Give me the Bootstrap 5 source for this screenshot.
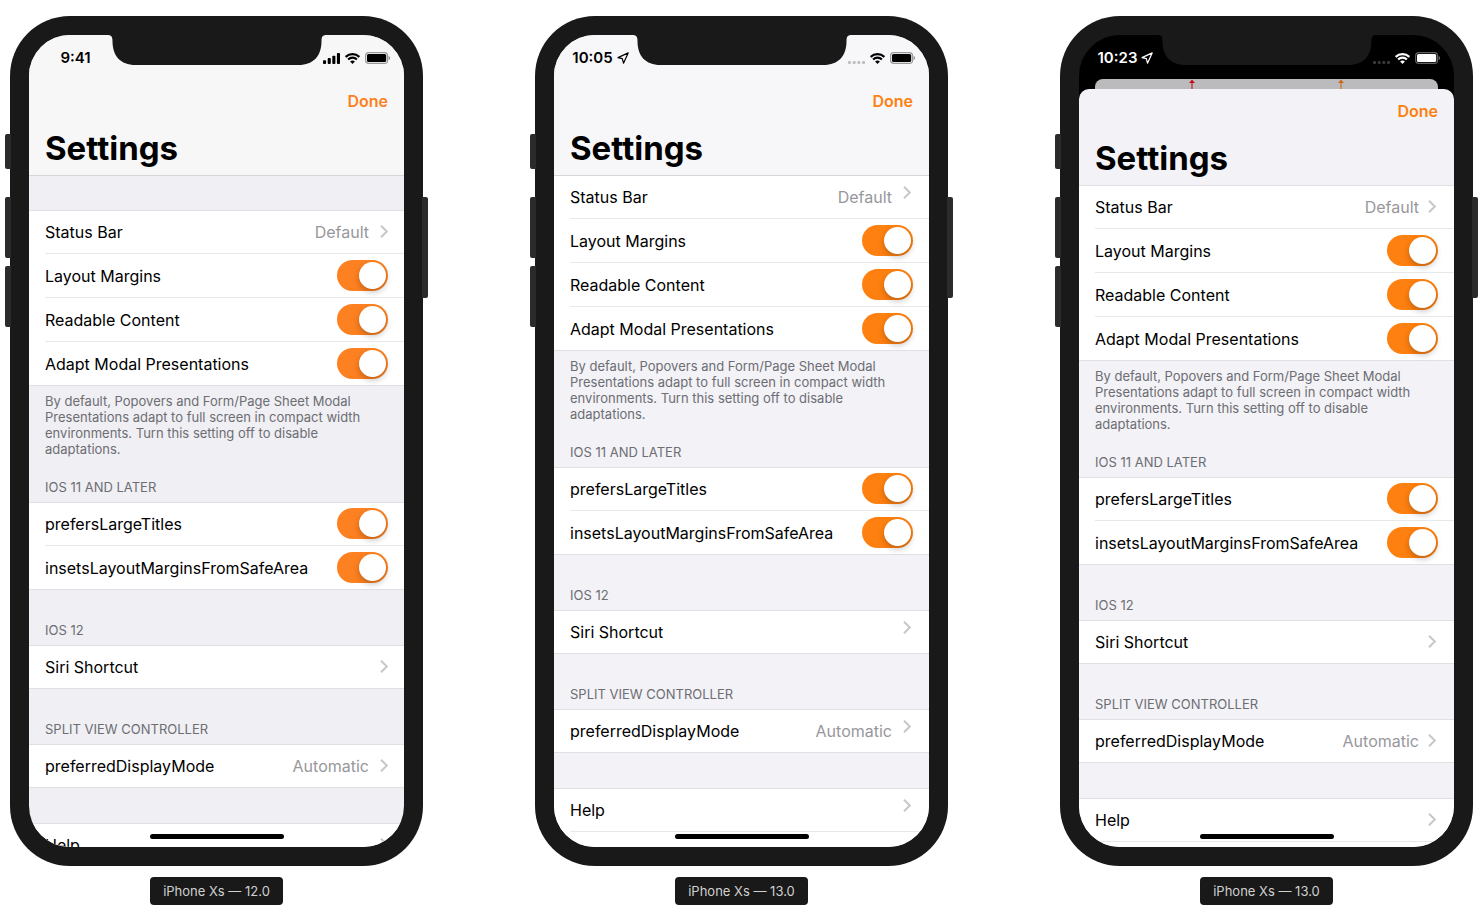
<!DOCTYPE html>
<html lang="en">
<head>
<meta charset="utf-8">
<meta name="viewport" content="width=device-width, initial-scale=1">
<title>Settings on iPhone Xs</title>
<link href="https://cdn.jsdelivr.net/npm/bootstrap@5.3.0/dist/css/bootstrap.min.css" rel="stylesheet">
<style>
  body { font-family: Inter, "Liberation Sans", sans-serif; font-size: 16px; background: #fff; color: #000; }
  .gallery { padding: 16px 10px; }
  .device { flex: 0 1 413px; min-width: 320px; }
  .shell { background: #191919; border-radius: 60px; padding: 19px; }
  .screen { aspect-ratio: 375 / 812; border-radius: 41px; background: #efeff4; --rule: #e0e0e4; --tint: #fd8120; --edge: 16px; }
  .ios13 { background: #f2f2f7; --tint: #fe8010; --edge: 18px; }
  .modal-screen { background: #000; }

  /* hardware keys on the sides of the shell */
  .key { position: absolute; left: -5px; width: 6px; background: #2b2b2b; border-radius: 2px 0 0 2px; }
  .key-mute { top: 118px; height: 35px; }
  .key-up { top: 181px; height: 61px; }
  .key-down { top: 250px; height: 61px; }
  .key-power { left: auto; right: -5px; top: 181px; height: 101px; border-radius: 0 2px 2px 0; }
  .notch { position: absolute; top: 0; left: 50%; transform: translateX(-50%); z-index: 3; }
  .home-bar { position: absolute; bottom: 8px; left: 50%; transform: translateX(-50%); width: 134px; height: 5px; border-radius: 3px; background: #000; z-index: 3; }

  .status { height: 44px; padding-right: 14px; font-size: 15px; font-weight: 600; flex: none; }
  .clock { width: 93px; gap: 4px; padding-top: 2px; }
  .radios { gap: 5px; padding-top: 2px; }

  .top-area { background: #f7f7f7; box-shadow: 0 1px 0 #d6d6d8; z-index: 1; flex: none; }
  .ios13 .top-area { background: #f7f7f9; }
  .sheet { background: #f2f2f7; border-radius: 10px 10px 0 0; }
  .ios13 .sheet .top-area { background: none; box-shadow: none; }
  .done-row { height: 44px; padding: 0 16px; }
  .done-btn { color: var(--tint); font-size: 16px; font-weight: 600; line-height: 24px; }
  .big-title { height: 52px; padding: 0 16px; font-size: 33px; font-weight: 700; line-height: 50px; }
  .peek { height: 10px; margin: 0 16px; padding: 0 92px; background: #bbbbbd; border-radius: 8px 8px 0 0; flex: none; }

  .group { background: #fff; box-shadow: inset 0 1px 0 var(--rule), inset 0 -1px 0 var(--rule); flex: none; }
  .group.open { box-shadow: inset 0 1px 0 var(--rule); }
  .cell { height: 44px; margin-left: 16px; padding-right: 16px; border-bottom: 1px solid #e8e8ea; color: #000; text-decoration: none; }
  .group:not(.open) .cell:last-child { border-bottom-color: transparent; }
  a.cell { padding-right: var(--edge); }
  .cell-value { color: #97979c; margin-right: 11px; }
  .sheet .cell-value { margin-right: 9px; }
  .chevron { color: #c7c7cc; flex: none; }
  .raised .chevron { margin-bottom: 8px; }
  .gap-block { height: 35px; flex: none; }
  .note { padding: 7px 32px 0 16px; font-size: 13px; line-height: 16px; height: 72px; color: #6d6d72; flex: none; }
  .group-head { height: 55px; padding: 0 16px 7px; font-size: 13px; line-height: 16px; color: #6d6d72; flex: none; }
  .note + .group-head { height: 44px; }

  .toggle { -webkit-appearance: none; appearance: none; flex: none; width: 51px; height: 31px; margin: 0; padding: 2px; border-radius: 16px; background: #e5e5ea; }
  .toggle::before { content: ""; display: block; width: 27px; height: 27px; border-radius: 50%; background: #fff; box-shadow: 0 3px 6px rgba(0,0,0,.24); }
  .toggle:checked { background: var(--tint); }
  .toggle:checked::before { margin-left: auto; }

  .tag { background: #191919; color: #d0d0d0; border-radius: 4px; margin-top: 11px; padding: 6px 13px; font-size: 13px; line-height: 16px; }
</style>
</head>
<body>
<svg class="d-none" aria-hidden="true">
  <symbol id="notch" viewBox="0 0 219 30"><path fill="#191919" d="M0 0C4 0 5 2 5 6C5 21 13 30 28 30H191C206 30 214 21 214 6C214 2 215 0 219 0Z"/></symbol>
  <symbol id="chev" viewBox="0 0 8 13"><path d="M1 .8 6.8 6.5 1 12.2" fill="none" stroke="currentColor" stroke-width="2"/></symbol>
  <symbol id="bars" viewBox="0 0 17 11"><path fill="currentColor" d="M0 8.2q0-.9.9-.9h1.3q.9 0 .9.9v1.900q0 .9-.9.9H.9q-.9 0-.9-.9zM4.700 6q0-.9.9-.9h1.300q.9 0 .9.9v4.100q0 .9-.9.9H5.600q-.9 0-.9-.9zM9.300 3.600q0-.9.9-.9h1.300q.9 0 .9.9v6.500q0 .9-.9.9h-1.300q-.9 0-.9-.9zM13.900.9q0-.9.9-.9h1.300q.9 0 .9.9v9.200q0 .9-.9.9h-1.300q-.9 0-.9-.9z"/></symbol>
  <symbol id="dots" viewBox="0 0 17 11"><g fill="currentColor" opacity=".22"><rect y="8" width="3" height="3" rx="1"/><rect x="4.700" y="8" width="3" height="3" rx="1"/><rect x="9.300" y="8" width="3" height="3" rx="1"/><rect x="14" y="8" width="3" height="3" rx="1"/></g></symbol>
  <symbol id="wifi" viewBox="0 0 15 11"><g fill="none" stroke="currentColor" stroke-width="2.100"><path d="M.7 3.900a9.700 9.700 0 0 1 13.600 0"/><path d="M3.100 6.500a6.200 6.200 0 0 1 8.800 0"/></g><path fill="currentColor" d="M5.100 8.600a3.400 3.400 0 0 1 4.800 0L7.500 11z"/></symbol>
  <symbol id="battery" viewBox="0 0 25 12"><rect x=".6" y=".6" width="22" height="10.800" rx="3.200" fill="none" stroke="currentColor" stroke-width="1.200" opacity=".38"/><rect x="2" y="2" width="19.200" height="8" rx="1.600" fill="currentColor"/><path d="M23.700 4v4q1.300-.6 1.300-2t-1.300-2z" fill="currentColor" opacity=".45"/></symbol>
  <symbol id="locate" viewBox="0 0 12 12"><path d="M1 5.600 11.200.9 6.500 11.200 5.300 6.700z" fill="none" stroke="currentColor" stroke-width="1.200" stroke-linejoin="round"/></symbol>
  <symbol id="arrow" viewBox="0 0 10 10"><path d="M5 10V3" stroke="currentColor"/><path d="M2.200 4 5 .4 7.800 4z" fill="currentColor"/></symbol>
</svg>

<main class="gallery d-flex flex-wrap justify-content-between">

  <!-- iOS 12 -->
  <section class="device d-flex flex-column align-items-center">
    <div class="shell position-relative w-100">
      <span class="key key-mute"></span><span class="key key-up"></span><span class="key key-down"></span><span class="key key-power"></span>
      <div class="screen position-relative overflow-hidden d-flex flex-column">
        <svg class="notch" width="219" height="30"><use href="#notch"/></svg>
        <header class="top-area position-relative">
          <div class="status d-flex justify-content-between align-items-center">
            <div class="clock d-flex justify-content-center align-items-center">9:41</div>
            <div class="radios d-flex align-items-center"><svg width="17" height="11"><use href="#bars"/></svg><svg width="15" height="11"><use href="#wifi"/></svg><svg width="25" height="12"><use href="#battery"/></svg></div>
          </div>
          <div class="done-row d-flex justify-content-end align-items-center"><button type="button" class="done-btn btn border-0 p-0">Done</button></div>
          <h1 class="big-title m-0">Settings</h1>
        </header>
        <div class="gap-block"></div>
        <div class="group">
          <a href="#" class="cell d-flex align-items-center"><span class="me-auto">Status Bar</span><span class="cell-value">Default</span><svg class="chevron" width="8" height="13"><use href="#chev"/></svg></a>
          <div class="cell d-flex align-items-center justify-content-between"><label for="a1">Layout Margins</label><input class="toggle" type="checkbox" role="switch" id="a1" checked></div>
          <div class="cell d-flex align-items-center justify-content-between"><label for="a2">Readable Content</label><input class="toggle" type="checkbox" role="switch" id="a2" checked></div>
          <div class="cell d-flex align-items-center justify-content-between"><label for="a3">Adapt Modal Presentations</label><input class="toggle" type="checkbox" role="switch" id="a3" checked></div>
        </div>
        <p class="note m-0">By default, Popovers and Form/Page Sheet Modal Presentations adapt to full screen in compact width environments. Turn this setting off to disable adaptations.</p>
        <h2 class="group-head m-0 d-flex align-items-end fw-normal">IOS 11 AND LATER</h2>
        <div class="group">
          <div class="cell d-flex align-items-center justify-content-between"><label for="a4">prefersLargeTitles</label><input class="toggle" type="checkbox" role="switch" id="a4" checked></div>
          <div class="cell d-flex align-items-center justify-content-between"><label for="a5">insetsLayoutMarginsFromSafeArea</label><input class="toggle" type="checkbox" role="switch" id="a5" checked></div>
        </div>
        <h2 class="group-head m-0 d-flex align-items-end fw-normal">IOS 12</h2>
        <div class="group"><a href="#" class="cell d-flex align-items-center"><span class="me-auto">Siri Shortcut</span><svg class="chevron" width="8" height="13"><use href="#chev"/></svg></a></div>
        <h2 class="group-head m-0 d-flex align-items-end fw-normal">SPLIT VIEW CONTROLLER</h2>
        <div class="group"><a href="#" class="cell d-flex align-items-center"><span class="me-auto">preferredDisplayMode</span><span class="cell-value">Automatic</span><svg class="chevron" width="8" height="13"><use href="#chev"/></svg></a></div>
        <div class="gap-block"></div>
        <div class="group open"><a href="#" class="cell d-flex align-items-center"><span class="me-auto">Help</span><svg class="chevron" width="8" height="13"><use href="#chev"/></svg></a></div>
        <span class="home-bar"></span>
      </div>
    </div>
    <div class="tag">iPhone Xs — 12.0</div>
  </section>

  <!-- iOS 13, full screen -->
  <section class="device d-flex flex-column align-items-center">
    <div class="shell position-relative w-100">
      <span class="key key-mute"></span><span class="key key-up"></span><span class="key key-down"></span><span class="key key-power"></span>
      <div class="screen ios13 raised position-relative overflow-hidden d-flex flex-column">
        <svg class="notch" width="219" height="30"><use href="#notch"/></svg>
        <header class="top-area position-relative">
          <div class="status d-flex justify-content-between align-items-center">
            <div class="clock d-flex justify-content-center align-items-center">10:05<svg width="12" height="12"><use href="#locate"/></svg></div>
            <div class="radios d-flex align-items-center"><svg width="17" height="11"><use href="#dots"/></svg><svg width="15" height="11"><use href="#wifi"/></svg><svg width="25" height="12"><use href="#battery"/></svg></div>
          </div>
          <div class="done-row d-flex justify-content-end align-items-center"><button type="button" class="done-btn btn border-0 p-0">Done</button></div>
          <h1 class="big-title m-0">Settings</h1>
        </header>
        <div class="group">
          <a href="#" class="cell d-flex align-items-center"><span class="me-auto">Status Bar</span><span class="cell-value">Default</span><svg class="chevron" width="8" height="13"><use href="#chev"/></svg></a>
          <div class="cell d-flex align-items-center justify-content-between"><label for="b1">Layout Margins</label><input class="toggle" type="checkbox" role="switch" id="b1" checked></div>
          <div class="cell d-flex align-items-center justify-content-between"><label for="b2">Readable Content</label><input class="toggle" type="checkbox" role="switch" id="b2" checked></div>
          <div class="cell d-flex align-items-center justify-content-between"><label for="b3">Adapt Modal Presentations</label><input class="toggle" type="checkbox" role="switch" id="b3" checked></div>
        </div>
        <p class="note m-0">By default, Popovers and Form/Page Sheet Modal Presentations adapt to full screen in compact width environments. Turn this setting off to disable adaptations.</p>
        <h2 class="group-head m-0 d-flex align-items-end fw-normal">IOS 11 AND LATER</h2>
        <div class="group">
          <div class="cell d-flex align-items-center justify-content-between"><label for="b4">prefersLargeTitles</label><input class="toggle" type="checkbox" role="switch" id="b4" checked></div>
          <div class="cell d-flex align-items-center justify-content-between"><label for="b5">insetsLayoutMarginsFromSafeArea</label><input class="toggle" type="checkbox" role="switch" id="b5" checked></div>
        </div>
        <h2 class="group-head m-0 d-flex align-items-end fw-normal">IOS 12</h2>
        <div class="group"><a href="#" class="cell d-flex align-items-center"><span class="me-auto">Siri Shortcut</span><svg class="chevron" width="8" height="13"><use href="#chev"/></svg></a></div>
        <h2 class="group-head m-0 d-flex align-items-end fw-normal">SPLIT VIEW CONTROLLER</h2>
        <div class="group"><a href="#" class="cell d-flex align-items-center"><span class="me-auto">preferredDisplayMode</span><span class="cell-value">Automatic</span><svg class="chevron" width="8" height="13"><use href="#chev"/></svg></a></div>
        <div class="gap-block"></div>
        <div class="group open flex-fill"><a href="#" class="cell d-flex align-items-center"><span class="me-auto">Help</span><svg class="chevron" width="8" height="13"><use href="#chev"/></svg></a></div>
        <span class="home-bar"></span>
      </div>
    </div>
    <div class="tag">iPhone Xs — 13.0</div>
  </section>

  <!-- iOS 13, card sheet -->
  <section class="device d-flex flex-column align-items-center">
    <div class="shell position-relative w-100">
      <span class="key key-mute"></span><span class="key key-up"></span><span class="key key-down"></span><span class="key key-power"></span>
      <div class="screen ios13 modal-screen position-relative overflow-hidden d-flex flex-column">
        <svg class="notch" width="219" height="30"><use href="#notch"/></svg>
        <div class="status text-white d-flex justify-content-between align-items-center">
          <div class="clock d-flex justify-content-center align-items-center">10:23<svg width="12" height="12"><use href="#locate"/></svg></div>
          <div class="radios d-flex align-items-center"><svg width="17" height="11"><use href="#dots"/></svg><svg width="15" height="11"><use href="#wifi"/></svg><svg width="25" height="12"><use href="#battery"/></svg></div>
        </div>
        <div class="peek d-flex justify-content-between">
          <svg width="10" height="10" color="#c5040f"><use href="#arrow"/></svg>
          <svg width="10" height="10" color="#cc650c"><use href="#arrow"/></svg>
        </div>
        <div class="sheet d-flex flex-column flex-fill">
          <header class="top-area">
            <div class="done-row d-flex justify-content-end align-items-center"><button type="button" class="done-btn btn border-0 p-0">Done</button></div>
            <h1 class="big-title m-0">Settings</h1>
          </header>
          <div class="group">
            <a href="#" class="cell d-flex align-items-center"><span class="me-auto">Status Bar</span><span class="cell-value">Default</span><svg class="chevron" width="8" height="13"><use href="#chev"/></svg></a>
            <div class="cell d-flex align-items-center justify-content-between"><label for="c1">Layout Margins</label><input class="toggle" type="checkbox" role="switch" id="c1" checked></div>
            <div class="cell d-flex align-items-center justify-content-between"><label for="c2">Readable Content</label><input class="toggle" type="checkbox" role="switch" id="c2" checked></div>
            <div class="cell d-flex align-items-center justify-content-between"><label for="c3">Adapt Modal Presentations</label><input class="toggle" type="checkbox" role="switch" id="c3" checked></div>
          </div>
          <p class="note m-0">By default, Popovers and Form/Page Sheet Modal Presentations adapt to full screen in compact width environments. Turn this setting off to disable adaptations.</p>
          <h2 class="group-head m-0 d-flex align-items-end fw-normal">IOS 11 AND LATER</h2>
          <div class="group">
            <div class="cell d-flex align-items-center justify-content-between"><label for="c4">prefersLargeTitles</label><input class="toggle" type="checkbox" role="switch" id="c4" checked></div>
            <div class="cell d-flex align-items-center justify-content-between"><label for="c5">insetsLayoutMarginsFromSafeArea</label><input class="toggle" type="checkbox" role="switch" id="c5" checked></div>
          </div>
          <h2 class="group-head m-0 d-flex align-items-end fw-normal">IOS 12</h2>
          <div class="group"><a href="#" class="cell d-flex align-items-center"><span class="me-auto">Siri Shortcut</span><svg class="chevron" width="8" height="13"><use href="#chev"/></svg></a></div>
          <h2 class="group-head m-0 d-flex align-items-end fw-normal">SPLIT VIEW CONTROLLER</h2>
          <div class="group"><a href="#" class="cell d-flex align-items-center"><span class="me-auto">preferredDisplayMode</span><span class="cell-value">Automatic</span><svg class="chevron" width="8" height="13"><use href="#chev"/></svg></a></div>
          <div class="gap-block"></div>
          <div class="group open flex-fill"><a href="#" class="cell d-flex align-items-center"><span class="me-auto">Help</span><svg class="chevron" width="8" height="13"><use href="#chev"/></svg></a></div>
        </div>
        <span class="home-bar"></span>
      </div>
    </div>
    <div class="tag">iPhone Xs — 13.0</div>
  </section>
</main>
<script src="https://cdn.jsdelivr.net/npm/bootstrap@5.3.0/dist/js/bootstrap.bundle.min.js"></script>
</body>
</html>
